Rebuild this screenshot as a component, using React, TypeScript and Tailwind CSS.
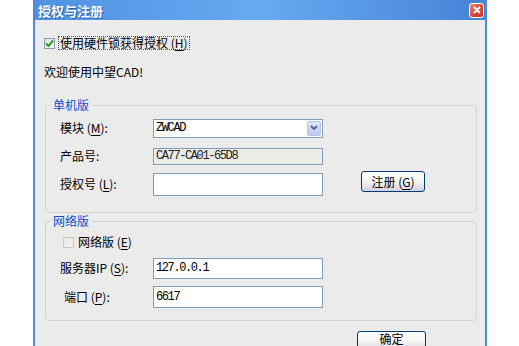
import type { ReactNode } from "react";

// 授权与注册 dialog (Windows XP look)

const cjk = "font-['Noto_Sans_CJK_SC',sans-serif]";
const mono = "font-['Liberation_Mono',monospace] tracking-[-1.4px]";

function Key({ children }: { children: ReactNode }) {
  return <span className="underline underline-offset-[2px]">{children}</span>;
}

function CheckBox({ checked }: { checked?: boolean }) {
  return (
    <span
      className={`flex h-[11px] w-[11px] shrink-0 items-center justify-center border ${
        checked
          ? "border-[#8c9cb4] bg-linear-to-br from-[#dedcd4] to-white"
          : "border-[#c9c9c4] bg-linear-to-br from-[#e6e6e2] to-[#f6f6f4]"
      }`}
    >
      {checked && (
        <svg width="9" height="9" viewBox="0 0 9 9">
          <path d="M1 4.5 L3.5 7 L8 1.5" fill="none" stroke="#21a121" strokeWidth="2" />
        </svg>
      )}
    </span>
  );
}

function TextBox({ value, h, readOnly }: { value?: string; h: string; readOnly?: boolean }) {
  return (
    <div
      className={`flex w-[170px] items-center border border-[#7f9db9] px-[2px] text-[12px] ${h} ${
        readOnly ? "bg-[#ebebe8] text-[#222]" : "bg-white text-black"
      } ${mono}`}
    >
      {value}
    </div>
  );
}

function XpButton({ children, w, extra = "" }: { children: ReactNode; w: string; extra?: string }) {
  return (
    <button
      className={`flex h-[21px] ${w} ${extra} items-center justify-center rounded-[3px] border border-[#003c74] bg-linear-to-b from-white via-[#f4f4f0] to-[#d6d0e6] text-[12px] text-black`}
    >
      {children}
    </button>
  );
}

function Row({ label, children, h }: { label: ReactNode; children: ReactNode; h: string }) {
  return (
    <div className={`flex items-center ${h}`}>
      <div className="w-[93px] shrink-0 text-[12px]">{label}</div>
      {children}
    </div>
  );
}

export default function App() {
  return (
    <div className={`h-[346px] w-[519px] overflow-hidden bg-white ${cjk}`}>
      <div className="ml-[33px] flex h-[360px] w-[454px] flex-col border-x-2 border-[#4f88dc]">
        {/* Title bar */}
        <div className="flex h-[20px] shrink-0 items-center justify-between bg-linear-to-r from-[#4f90e2] via-[#66aaf1] to-[#4783d8] pl-[3px] pr-[1px]">
          <span className="text-[13px] font-bold leading-none text-white [text-shadow:1px_1px_0_#2a5fb0]">
            授权与注册
          </span>
          <span className="flex h-[15px] w-[15px] items-center justify-center rounded-[3px] border border-white bg-linear-to-br from-[#e98a7a] via-[#d9493a] to-[#c03828]">
            <svg width="8" height="8" viewBox="0 0 8 8">
              <path d="M1 1 L7 7 M7 1 L1 7" stroke="white" strokeWidth="1.8" />
            </svg>
          </span>
        </div>

        {/* Client area */}
        <div className="flex flex-1 flex-col bg-[#ebebec] pl-[9px] pr-[8px] text-black">
          <div className="mt-[16px] flex h-[14px] items-center">
            <CheckBox checked />
            <span className="ml-[3px] border border-dotted border-[#555] px-[1px] text-[12px] leading-[12px]">
              使用硬件锁获得授权 (<Key>H</Key>)
            </span>
          </div>

          <div className="mt-[14px] h-[16px] text-[12px] leading-[16px]">欢迎使用中望CAD!</div>

          {/* 单机版 */}
          <fieldset className="ml-[1px] mt-[17px] rounded-[4px] border border-[#d4d4cf] pb-[14px]">
            <legend className="ml-[4px] px-[3px] text-[12px] leading-[16px] text-[#0c4dd6]">单机版</legend>
            <div className="pl-[14px]">
              <Row h="h-[28px] mt-[1px]" label={<>模块 (<Key>M</Key>):</>}>
                <div className="flex h-[19px] w-[170px] items-center justify-between border border-[#7f9db9] bg-white pl-[2px] pr-[1px]">
                  <span className={`text-[12px] ${mono}`}>ZWCAD</span>
                  <span className="flex h-[15px] w-[14px] items-center justify-center rounded-[2px] border border-[#b4c3e6] bg-linear-to-b from-[#dfe6f8] to-[#b9c8ee]">
                    <svg width="8" height="6" viewBox="0 0 8 6">
                      <path d="M1 1 L4 4 L7 1" fill="none" stroke="#4d6185" strokeWidth="1.8" />
                    </svg>
                  </span>
                </div>
              </Row>
              <Row h="h-[28px]" label="产品号:">
                <TextBox h="h-[17px]" value="CA77-CA01-65D8" readOnly />
              </Row>
              <Row h="h-[28px]" label={<>授权号 (<Key>L</Key>):</>}>
                <TextBox h="h-[23px]" />
                <div className="ml-[38px] -mt-[5px]">
                  <XpButton w="w-[64px]">
                    注册 (<Key>G</Key>)
                  </XpButton>
                </div>
              </Row>
            </div>
          </fieldset>

          {/* 网络版 */}
          <fieldset className="ml-[1px] rounded-[4px] border border-[#d4d4cf] pb-[7px]">
            <legend className="ml-[4px] px-[3px] text-[12px] leading-[16px] text-[#0c4dd6]">网络版</legend>
            <div className="pl-[14px]">
              <div className="flex h-[26px] items-center pl-[3px]">
                <CheckBox />
                <span className="ml-[4px] text-[12px]">
                  网络版 (<Key>E</Key>)
                </span>
              </div>
              <Row h="h-[26px]" label={<>服务器IP (<Key>S</Key>):</>}>
                <TextBox h="h-[21px]" value="127.0.0.1" />
              </Row>
              <Row h="h-[32px]" label={<span className="pl-[4px]">端口 (<Key>P</Key>):</span>}>
                <TextBox h="h-[22px]" value="6617" />
              </Row>
            </div>
          </fieldset>

          <div className="mt-[10px] flex justify-end pr-[51px]">
            <XpButton w="w-[69px]" extra="pb-[5px]">
              确定
            </XpButton>
          </div>
        </div>
      </div>
    </div>
  );
}
